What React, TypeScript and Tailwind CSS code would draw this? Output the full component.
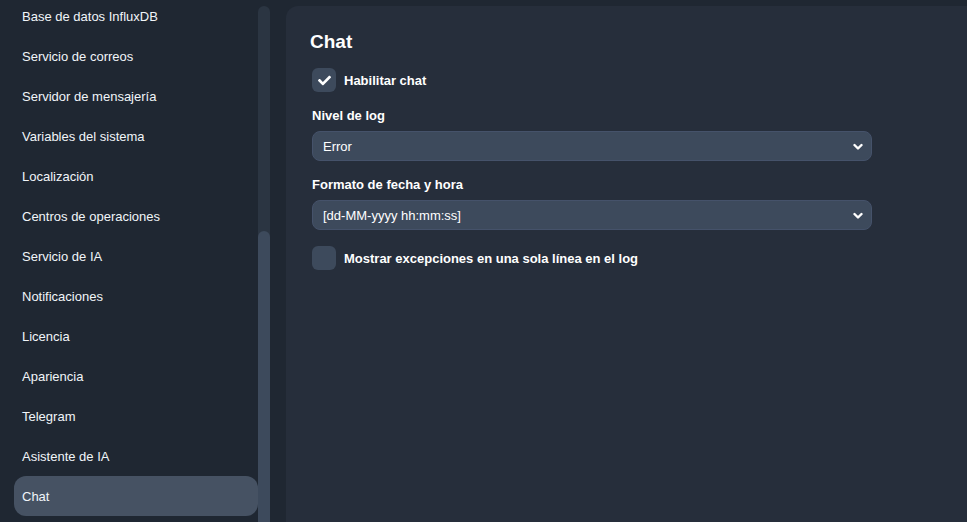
const menuItems = [
  'Base de datos InfluxDB',
  'Servicio de correos',
  'Servidor de mensajería',
  'Variables del sistema',
  'Localización',
  'Centros de operaciones',
  'Servicio de IA',
  'Notificaciones',
  'Licencia',
  'Apariencia',
  'Telegram',
  'Asistente de IA',
  'Chat',
];

function CheckIcon() {
  return (
    <svg width="13" height="13" viewBox="0 0 512 512" fill="white">
      <path d="M173.898 439.404l-166.4-166.4c-9.997-9.997-9.997-26.206 0-36.204l36.203-36.204c9.997-9.998 26.207-9.998 36.204 0L192 312.69 432.095 72.596c9.997-9.997 26.207-9.997 36.204 0l36.203 36.204c9.997 9.997 9.997 26.206 0 36.204l-294.4 294.401c-9.998 9.997-26.207 9.997-36.204-.001z" />
    </svg>
  );
}

function Checkbox({ checked, label }: { checked: boolean; label: string }) {
  return (
    <div className="flex items-center gap-2">
      <div className="w-6 h-6 rounded-md bg-[#3d4a5c] flex items-center justify-center">
        {checked && <CheckIcon />}
      </div>
      <span className="pt-0.5 text-[13px] font-bold text-white">{label}</span>
    </div>
  );
}

function SelectBox({ value }: { value: string }) {
  return (
    <div className="w-[560px] h-[30px] rounded-lg bg-[#3d4a5c] border border-[#45526a] flex items-center justify-between pl-2.5 pr-1.5 text-[13px] text-white">
      <span className="pt-0.5">{value}</span>
      <svg width="10" height="8" viewBox="0 0 10 8" className="mr-0.5 mt-px">
        <polyline points="1.5,2 5,5.5 8.5,2" fill="none" stroke="white" strokeWidth="2.4" strokeLinecap="round" strokeLinejoin="round" />
      </svg>
    </div>
  );
}

export default function App() {
  return (
    <div className="h-[522px] w-full overflow-hidden bg-[#1f2732] flex font-['Liberation_Sans',Arial,sans-serif]">
      {/* Sidebar */}
      <aside className="flex w-[270px] shrink-0 pl-[14px]">
        <nav className="w-[244px] -mt-[3px] flex flex-col">
          {menuItems.map((item) => (
            <div
              key={item}
              className={`h-10 shrink-0 px-2 flex items-center rounded-xl text-[13px] text-[#f1f5f9] ${
                item === 'Chat' ? 'bg-[#465263] -mt-px pt-0.5' : ''
              }`}
            >
              {item}
            </div>
          ))}
        </nav>
        <div className="w-3 mt-1.5 rounded-t-full bg-[#2b3542] flex flex-col">
          <div className="mt-[225px] flex-1 rounded-t-full bg-[#3d4a5c]" />
        </div>
      </aside>

      {/* Content */}
      <main className="ml-4 mt-1.5 flex-1 bg-[#262e3b] rounded-tl-xl pl-[26px] pt-[22px]">
        <h2 className="-ml-0.5 text-[19px] leading-7 font-bold text-white">Chat</h2>
        <div className="mt-[12px]">
          <Checkbox checked label="Habilitar chat" />
        </div>
        <div className="mt-[13px] h-5 pt-0.5 flex items-center text-[13px] font-bold text-white">Nivel de log</div>
        <div className="mt-1.5">
          <SelectBox value="Error" />
        </div>
        <div className="mt-[13px] h-5 pt-0.5 flex items-center text-[13px] font-bold text-white">Formato de fecha y hora</div>
        <div className="mt-1.5">
          <SelectBox value="[dd-MM-yyyy hh:mm:ss]" />
        </div>
        <div className="mt-4">
          <Checkbox checked={false} label="Mostrar excepciones en una sola línea en el log" />
        </div>
      </main>
    </div>
  );
}
